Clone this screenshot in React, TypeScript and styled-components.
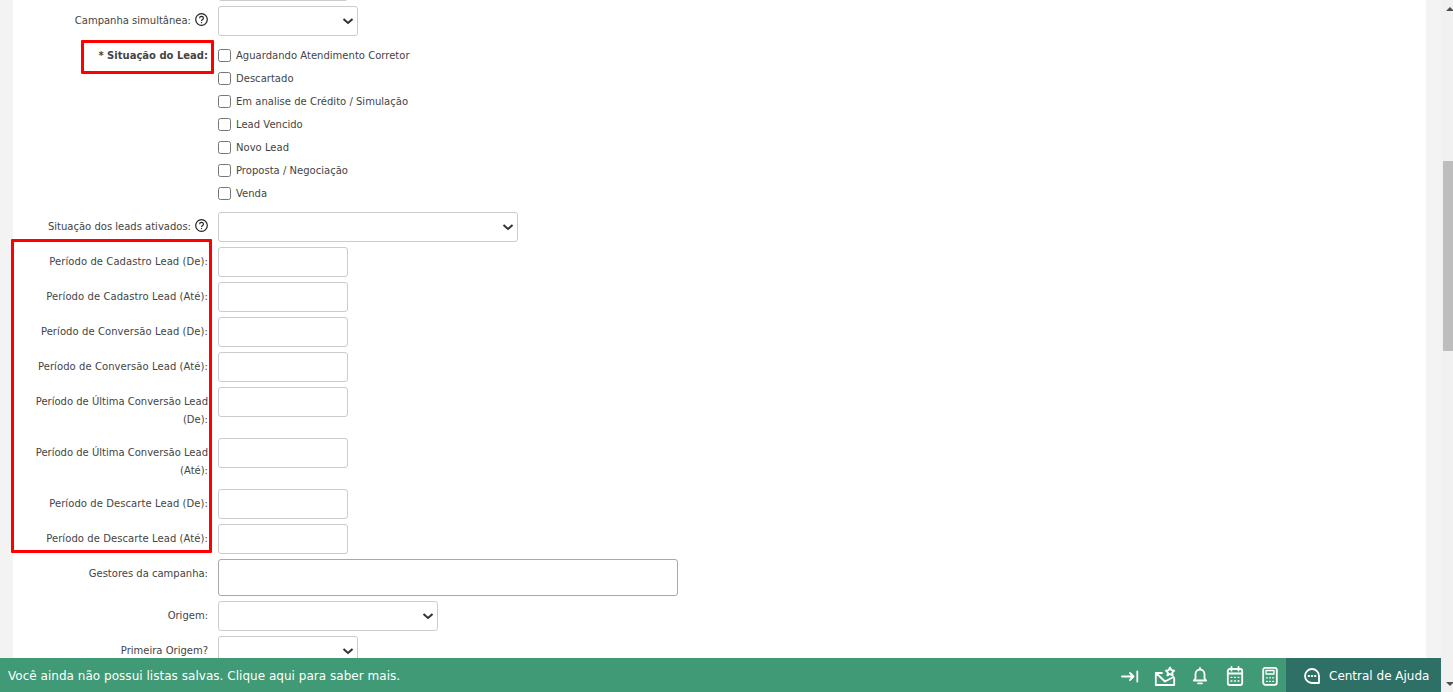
import React from 'react';
import styled, { createGlobalStyle } from 'styled-components';

const GlobalStyle = createGlobalStyle`
  html, body {
    margin: 0;
    padding: 0;
    height: 100%;
    overflow: hidden;
    background: #f3f3f3;
    font-family: "DejaVu Sans", Verdana, sans-serif;
  }
`;

const Page = styled.div`
  display: flex;
  height: 692px;
  overflow: hidden;
  position: relative;
`;

const Gutter = styled.div`
  flex: 1;
  padding: 0 15px 0 13px;
  overflow: hidden;
`;

const Sheet = styled.div`
  background: #fff;
  height: 721px;
  margin-top: -29px;
  display: flex;
  flex-direction: column;
  gap: 5px;
`;

const Row = styled.div`
  display: flex;
  align-items: flex-start;
  gap: 10px;
`;

const Label = styled.label<{ $bold?: boolean; $spaced?: boolean }>`
  width: 195px;
  flex: none;
  text-align: right;
  font-size: 10px;
  line-height: 18px;
  padding: 6px 0 4px;
  letter-spacing: ${(p) => (p.$spaced ? '0.08px' : '0')};
  color: #444;
  font-weight: ${(p) => (p.$bold ? 700 : 400)};
`;

const Help = styled.span`
  display: inline-flex;
  vertical-align: -2px;
  margin-left: 4px;
  color: #222;
`;

const Field = styled.div<{ $w: number; $h?: number }>`
  width: ${(p) => p.$w}px;
  height: ${(p) => p.$h ?? 30}px;
  box-sizing: border-box;
  border: 1px solid ${(p) => (p.$h ? '#a9a9a9' : '#ccc')};
  border-radius: 3px;
  background: #fff;
  position: relative;
`;

const Caret = styled.svg`
  position: absolute;
  right: 4px;
  top: 9px;
`;

const Checks = styled.div`
  display: flex;
  flex-direction: column;
  padding: 3px 0 2px;
`;

const CheckRow = styled.div`
  display: flex;
  align-items: center;
  height: 23px;
  gap: 5px;
  font-size: 10px;
  letter-spacing: 0.02px;
  color: #444;
`;

const Box = styled.span`
  width: 13px;
  height: 13px;
  box-sizing: border-box;
  border: 1px solid #767676;
  border-radius: 2.5px;
  background: #fff;
`;

const Mark = styled.div<{ $x: number; $y: number; $w: number; $h: number }>`
  position: absolute;
  left: ${(p) => p.$x}px;
  top: ${(p) => p.$y}px;
  width: ${(p) => p.$w}px;
  height: ${(p) => p.$h}px;
  box-sizing: border-box;
  border: 3px solid #f00;
  border-radius: 1px;
  pointer-events: none;
`;

const BottomBar = styled.div`
  position: absolute;
  left: 0;
  right: 12px;
  bottom: 0;
  height: 34px;
  background: #409a75;
  color: #fff;
  display: flex;
  align-items: center;
`;

const Notice = styled.span`
  flex: 1;
  padding: 2px 0 0 8px;
  font-size: 12px;
  letter-spacing: 0.03px;
`;

const Tools = styled.div`
  display: flex;
  align-items: center;
  gap: 13px;
  padding: 2px 5.5px 0 0;
`;

const ToolIcon = styled.svg`
  display: block;
  fill: none;
  stroke: #fff;
  stroke-width: 1.8;
  stroke-linecap: round;
  stroke-linejoin: round;
`;

const HelpDesk = styled.div`
  width: 155px;
  height: 100%;
  box-sizing: border-box;
  background: #2e6f66;
  display: flex;
  align-items: center;
  gap: 8px;
  padding: 2px 0 0 17px;
  font-size: 12px;
`;

const Scrollbar = styled.div`
  width: 12px;
  flex: none;
  background: #f1f1f1;
  position: relative;
`;

const Thumb = styled.div`
  position: absolute;
  top: 161px;
  left: 2px;
  right: 0;
  height: 190px;
  background: #bdbdbd;
`;

const Arrow = styled.div<{ $down?: boolean }>`
  position: absolute;
  left: 5px;
  ${(p) => (p.$down ? 'bottom: 6px;' : 'top: 7px;')}
  width: 0;
  height: 0;
  border-left: 4px solid transparent;
  border-right: 4px solid transparent;
  ${(p) => (p.$down ? 'border-top: 4px solid #505050;' : 'border-bottom: 4px solid #505050;')}
`;

const Chevron = () => (
  <Caret width="12" height="10" viewBox="0 0 12 10" fill="none">
    <path d="M2.5 3L7 7l4.5-4" stroke="#333" strokeWidth="2" />
  </Caret>
);

const QuestionIcon = () => (
  <Help>
    <svg width="13" height="13" viewBox="0 0 13 13" fill="none" stroke="currentColor" strokeWidth="1.2">
      <circle cx="6.5" cy="6.5" r="5.8" />
      <path d="M4.6 5.2c0-2.4 3.8-2.4 3.8 0 0 1.4-1.9 1.3-1.9 2.8" />
      <path d="M6.5 9.1v1.1" />
    </svg>
  </Help>
);

const situations = [
  'Aguardando Atendimento Corretor',
  'Descartado',
  'Em analise de Crédito / Simulação',
  'Lead Vencido',
  'Novo Lead',
  'Proposta / Negociação',
  'Venda',
];

const periods = [
  'Período de Cadastro Lead (De):',
  'Período de Cadastro Lead (Até):',
  'Período de Conversão Lead (De):',
  'Período de Conversão Lead (Até):',
  'Período de Última Conversão Lead (De):',
  'Período de Última Conversão Lead (Até):',
  'Período de Descarte Lead (De):',
  'Período de Descarte Lead (Até):',
];

export default function App() {
  return (
    <>
      <GlobalStyle />
      <Page>
        <Gutter>
          <Sheet>
            <Row>
              <Label />
              <Field $w={130} />
            </Row>
            <Row>
              <Label>
                Campanha simultânea:
                <QuestionIcon />
              </Label>
              <Field $w={140}>
                <Chevron />
              </Field>
            </Row>
            <Row>
              <Label $bold>* Situação do Lead:</Label>
              <Checks>
                {situations.map((s) => (
                  <CheckRow key={s}>
                    <Box />
                    {s}
                  </CheckRow>
                ))}
              </Checks>
            </Row>
            <Row>
              <Label>
                Situação dos leads ativados:
                <QuestionIcon />
              </Label>
              <Field $w={300}>
                <Chevron />
              </Field>
            </Row>
            {periods.map((p) => (
              <Row key={p}>
                <Label $spaced={p.length < 33}>{p}</Label>
                <Field $w={130} />
              </Row>
            ))}
            <Row>
              <Label>Gestores da campanha:</Label>
              <Field $w={460} $h={37} />
            </Row>
            <Row>
              <Label>Origem:</Label>
              <Field $w={220}>
                <Chevron />
              </Field>
            </Row>
            <Row>
              <Label>Primeira Origem?</Label>
              <Field $w={140}>
                <Chevron />
              </Field>
            </Row>
          </Sheet>
        </Gutter>
        <Scrollbar>
          <Arrow />
          <Thumb />
          <Arrow $down />
        </Scrollbar>
        <Mark $x={81} $y={40} $w={133} $h={34} />
        <Mark $x={11} $y={239} $w={201} $h={314} />
        <BottomBar>
          <Notice>Você ainda não possui listas salvas. Clique aqui para saber mais.</Notice>
          <Tools>
            <ToolIcon width="22" height="22" viewBox="0 0 22 22">
              <path d="M3 11.5h11.5M11 8l3.5 3.5L11 15M18.3 6.5v10" />
            </ToolIcon>
            <ToolIcon width="22" height="22" viewBox="0 0 22 22">
              <path d="M1.8 8v12h18.4v-7M2 8h6M2.5 8.5l8.5 8 8.5-4.5" />
              <path d="M16 2.5l1.4 2.7 2.8.4-2 2 .5 2.8-2.7-1.4-2.6 1.4.5-2.8-2-2 2.8-.4z" />
            </ToolIcon>
            <ToolIcon width="22" height="22" viewBox="0 0 22 22">
              <path d="M11 3v1.5M6.5 13.500V9a4.500 4.500 0 0 1 9 0v4.500l1.700 2H4.800zM9 18.300h4" />
            </ToolIcon>
            <ToolIcon width="22" height="22" viewBox="0 0 22 22">
              <rect x="3.8" y="4" width="14.4" height="16" rx="2" />
              <path d="M3.8 8.5h14.4M7.5 2v3.5M14.5 2v3.5" />
              <path d="M7 12.3h1M10.5 12.3h1M14 12.3h1M7 16h1M10.5 16h1M14 16h1" strokeWidth="1.3" />
            </ToolIcon>
            <ToolIcon width="22" height="22" viewBox="0 0 22 22">
              <rect x="4.2" y="2.8" width="13.6" height="17" rx="2" />
              <rect x="7" y="5.5" width="8" height="3.5" strokeWidth="1.3" />
              <path d="M7.5 12.8h.8M10.6 12.8h.8M13.7 12.8h.8M7.5 16.3h.8M10.6 16.3h.8M13.7 16.3h.8" strokeWidth="1.3" />
            </ToolIcon>
          </Tools>
          <HelpDesk>
            <ToolIcon width="18" height="18" viewBox="0 0 18 18">
              <path d="M9 2a7 7 0 1 0 0 14h7V9a7 7 0 0 0-7-7z" />
              <path d="M5.5 9h.6M8.7 9h.6M11.9 9h.6" strokeWidth="1.9" />
            </ToolIcon>
            Central de Ajuda
          </HelpDesk>
        </BottomBar>
      </Page>
    </>
  );
}
